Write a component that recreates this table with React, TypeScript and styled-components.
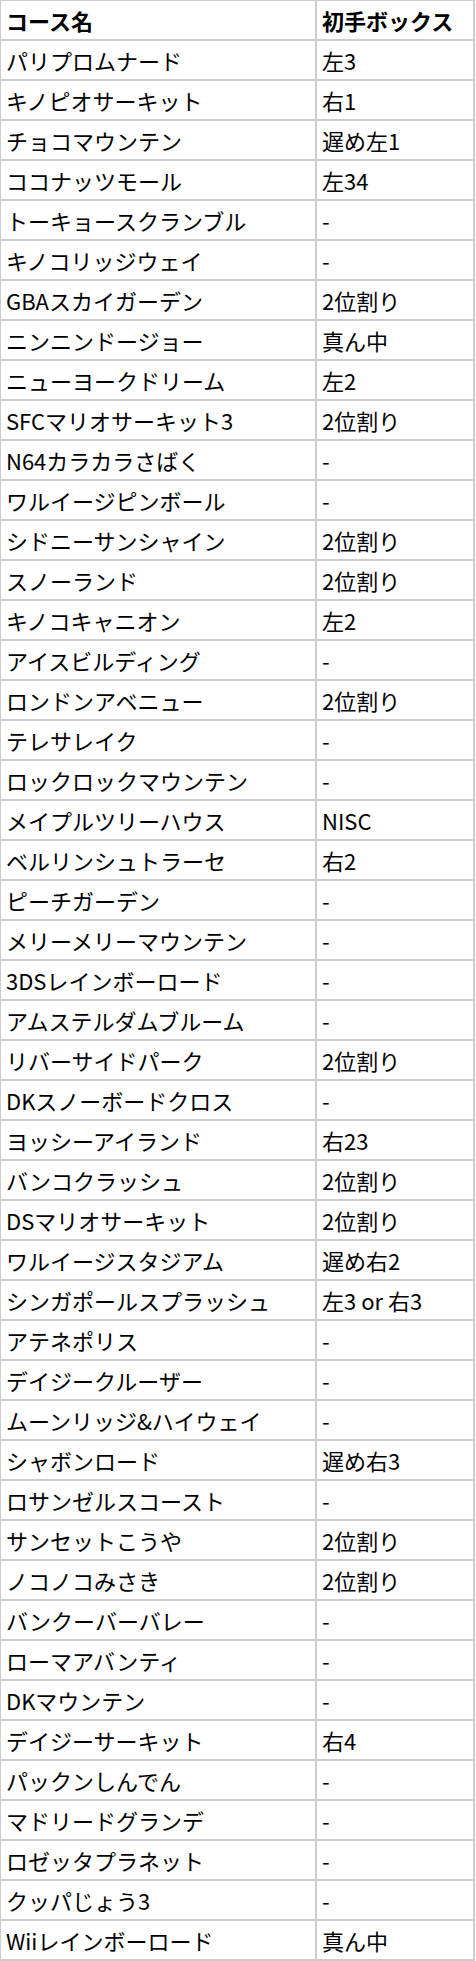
import React from 'react';
import styled, { createGlobalStyle } from 'styled-components';

const GlobalStyle = createGlobalStyle`
  html, body {
    margin: 0;
    padding: 0;
    background: #fff;
  }
  body {
    font-family: "Noto Sans CJK JP", "Noto Sans", sans-serif;
    color: #000;
  }
`;

const Table = styled.table`
  border-collapse: collapse;
  table-layout: fixed;
  width: 476px;
  margin: -1px 0 0 -1px;
  font-size: 22px;
  line-height: 1;
`;

const HeadCell = styled.th<{ $w?: number }>`
  border: 2px solid #cccccc;
  height: 38px;
  padding: 0 5px;
  text-align: left;
  font-weight: 700;
  vertical-align: middle;
  ${p => (p.$w ? `width: ${p.$w}px;` : '')}
`;

const Cell = styled.td`
  border: 2px solid #cccccc;
  height: 38px;
  padding: 0 5px;
  font-weight: 400;
  vertical-align: middle;
  white-space: nowrap;
`;

const rows: [string, string][] = [
  ['パリプロムナード', '左3'],
  ['キノピオサーキット', '右1'],
  ['チョコマウンテン', '遅め左1'],
  ['ココナッツモール', '左34'],
  ['トーキョースクランブル', '-'],
  ['キノコリッジウェイ', '-'],
  ['GBAスカイガーデン', '2位割り'],
  ['ニンニンドージョー', '真ん中'],
  ['ニューヨークドリーム', '左2'],
  ['SFCマリオサーキット3', '2位割り'],
  ['N64カラカラさばく', '-'],
  ['ワルイージピンボール', '-'],
  ['シドニーサンシャイン', '2位割り'],
  ['スノーランド', '2位割り'],
  ['キノコキャニオン', '左2'],
  ['アイスビルディング', '-'],
  ['ロンドンアベニュー', '2位割り'],
  ['テレサレイク', '-'],
  ['ロックロックマウンテン', '-'],
  ['メイプルツリーハウス', 'NISC'],
  ['ベルリンシュトラーセ', '右2'],
  ['ピーチガーデン', '-'],
  ['メリーメリーマウンテン', '-'],
  ['3DSレインボーロード', '-'],
  ['アムステルダムブルーム', '-'],
  ['リバーサイドパーク', '2位割り'],
  ['DKスノーボードクロス', '-'],
  ['ヨッシーアイランド', '右23'],
  ['バンコクラッシュ', '2位割り'],
  ['DSマリオサーキット', '2位割り'],
  ['ワルイージスタジアム', '遅め右2'],
  ['シンガポールスプラッシュ', '左3 or 右3'],
  ['アテネポリス', '-'],
  ['デイジークルーザー', '-'],
  ['ムーンリッジ&ハイウェイ', '-'],
  ['シャボンロード', '遅め右3'],
  ['ロサンゼルスコースト', '-'],
  ['サンセットこうや', '2位割り'],
  ['ノコノコみさき', '2位割り'],
  ['バンクーバーバレー', '-'],
  ['ローマアバンティ', '-'],
  ['DKマウンテン', '-'],
  ['デイジーサーキット', '右4'],
  ['パックンしんでん', '-'],
  ['マドリードグランデ', '-'],
  ['ロゼッタプラネット', '-'],
  ['クッパじょう3', '-'],
  ['Wiiレインボーロード', '真ん中'],
];

const App = () => {
  return (
    <>
      <GlobalStyle />
      <Table>
        <thead>
          <tr>
            <HeadCell $w={304}>コース名</HeadCell>
            <HeadCell>初手ボックス</HeadCell>
          </tr>
        </thead>
        <tbody>
          {rows.map(([course, box]) => (
            <tr key={course}>
              <Cell>{course}</Cell>
              <Cell>{box}</Cell>
            </tr>
          ))}
        </tbody>
      </Table>
    </>
  );
};

export default App;
